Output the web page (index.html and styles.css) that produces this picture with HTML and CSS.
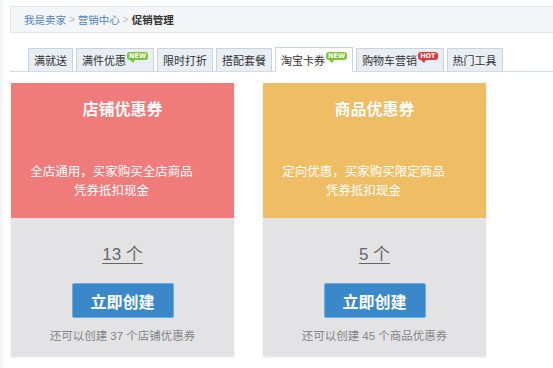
FILE: index.html
```html
<!DOCTYPE html>
<html lang="zh-CN">

<head>
    <meta charset="UTF-8">
    <meta name="viewport" content="width=device-width, initial-scale=1.0">
    <title>促销管理</title>
    <link rel="stylesheet" href="styles.css">
</head>

<body>

    <div class="breadcrumb">
        <a href="#">我是卖家</a>
        <span class="sep">&gt;</span>
        <a href="#">营销中心</a>
        <span class="sep">&gt;</span>
        <span class="current">促销管理</span>
    </div>

    <ul class="tabs">
        <li class="tab">满就送</li>
        <li class="tab">满件优惠<span class="badge badge-new">NEW</span></li>
        <li class="tab">限时打折</li>
        <li class="tab">搭配套餐</li>
        <li class="tab active">淘宝卡券<span class="badge badge-new">NEW</span></li>
        <li class="tab">购物车营销<span class="badge badge-hot">HOT</span></li>
        <li class="tab">热门工具</li>
    </ul>

    <div class="cards">
        <div class="card">
            <div class="card-top red">
                <h2>店铺优惠券</h2>
                <p>全店通用，买家购买全店商品<br>凭券抵扣现金</p>
            </div>
            <div class="card-bottom">
                <a class="count" href="#">13 个</a>
                <button class="create-btn">立即创建</button>
                <p class="remain">还可以创建 37 个店铺优惠券</p>
            </div>
        </div>

        <div class="card">
            <div class="card-top yellow">
                <h2>商品优惠券</h2>
                <p>定向优惠，买家购买限定商品<br>凭券抵扣现金</p>
            </div>
            <div class="card-bottom">
                <a class="count" href="#">5 个</a>
                <button class="create-btn">立即创建</button>
                <p class="remain">还可以创建 45 个商品优惠券</p>
            </div>
        </div>
    </div>

</body>

</html>
```

FILE: styles.css
```css
* {
    box-sizing: border-box;
    margin: 0;
    padding: 0;
}

body {
    background-color: #ffffff;
    font-family: "Liberation Sans", "Noto Sans CJK SC", sans-serif;
    color: #333;
    border-left: 3px solid #f6f6f8;
    min-height: 368px;
}

/* Breadcrumb */
.breadcrumb {
    display: flex;
    align-items: center;
    height: 27px;
    margin: 6px 0 0 7px;
    padding-left: 13px;
    background-color: #f4f5f7;
    border: 1px solid #e2e5e9;
    border-right: none;
    font-size: 10.5px;
}

.breadcrumb a {
    color: #4f83bd;
    text-decoration: none;
}

.breadcrumb .sep {
    color: #b5b9c0;
    margin: 0 3px;
    font-size: 10px;
}

.breadcrumb .current {
    color: #333;
    font-weight: bold;
}

/* Tabs */
.tabs {
    display: flex;
    align-items: flex-end;
    gap: 3px;
    list-style: none;
    margin: 14px 0 0 7px;
    padding-left: 18px;
    border-bottom: 1px solid #d4dbe3;
    height: 25px;
}

.tab {
    display: flex;
    align-items: center;
    height: 24px;
    padding: 0 5px;
    margin-bottom: -1px;
    background-color: #e8eef4;
    border: 1px solid #c9d3dd;
    border-bottom: 1px solid #d4dbe3;
    font-size: 11px;
    color: #333;
}

.tab.active {
    height: 25px;
    background-color: #ffffff;
    border-bottom-color: #ffffff;
}

.badge {
    position: relative;
    top: -4px;
    margin-left: 1px;
    padding: 0 2px;
    height: 8px;
    line-height: 8px;
    border-radius: 3px;
    font-size: 6.5px;
    font-weight: bold;
    color: #fff;
    font-family: "DejaVu Sans", sans-serif;
}

.badge::after {
    content: "";
    position: absolute;
    left: 3px;
    bottom: -3px;
    border-left: 3px solid transparent;
    border-right: 2px solid transparent;
    border-top: 3px solid;
}

.badge-new {
    background-color: #7fc13b;
}

.badge-new::after {
    border-top-color: #7fc13b;
}

.badge-hot {
    background-color: #d9383f;
}

.badge-hot::after {
    border-top-color: #d9383f;
}

/* Coupon cards */
.cards {
    display: flex;
    gap: 29px;
    margin-top: 11px;
    padding-left: 8px;
}

.card {
    width: 223px;
    box-shadow: 0 1px 2px rgba(0, 0, 0, 0.12);
}

.card-top {
    height: 135px;
    padding-top: 16px;
    color: #fff;
    text-align: center;
}

.card-top.red {
    background-color: #ef7b7b;
}

.card-top.yellow {
    background-color: #efbe64;
}

.card-top h2 {
    font-size: 16px;
    line-height: 22px;
    font-weight: bold;
    text-shadow: 0 0 1px rgba(0, 0, 0, 0.15);
}

.card-top p {
    margin-top: 42px;
    padding-right: 22px;
    font-size: 12.5px;
    line-height: 19px;
}

.card-bottom {
    display: flex;
    flex-direction: column;
    align-items: center;
    height: 138px;
    padding-top: 26px;
    background-color: #e3e3e5;
}

.count {
    font-size: 17px;
    line-height: 22px;
    color: #666;
    text-decoration: underline;
    text-underline-offset: 3px;
}

.create-btn {
    width: 102px;
    height: 35px;
    margin-top: 17px;
    background-color: #3a87c9;
    border: 1px solid #67afe8;
    border-radius: 2px;
    color: #fff;
    font-family: inherit;
    font-size: 16px;
    font-weight: bold;
    cursor: pointer;
}

.remain {
    margin-top: 10px;
    font-size: 11.5px;
    line-height: 16px;
    color: #858585;
}
```
